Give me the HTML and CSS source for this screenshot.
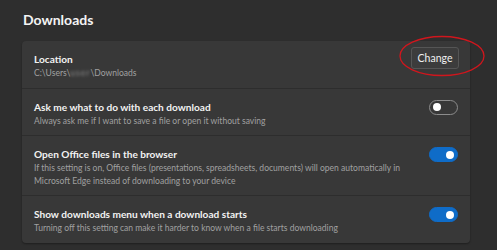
FILE: index.html
```html
<!DOCTYPE html>
<html>
<head>
<meta charset="utf-8">
<link rel="stylesheet" href="styles.css">
</head>
<body>
<main class="page">
  <h1 class="heading">Downloads</h1>
  <section class="card">
    <div class="row">
      <div class="text">
        <div class="title">Location</div>
        <div class="desc">C:\Users\<span class="blur">user</span>\Downloads</div>
      </div>
      <div class="action">
        <button class="btn">Change</button>
        <svg class="circle" width="90" height="44" viewBox="0 0 90 44"><ellipse cx="45" cy="22" rx="42" ry="19.5" fill="none" stroke="#d0161d" stroke-width="1.3"/></svg>
      </div>
    </div>
    <div class="row">
      <div class="text">
        <div class="title">Ask me what to do with each download</div>
        <div class="desc">Always ask me if I want to save a file or open it without saving</div>
      </div>
      <div class="action"><span class="toggle"></span></div>
    </div>
    <div class="row">
      <div class="text">
        <div class="title">Open Office files in the browser</div>
        <div class="desc">If this setting is on, Office files (presentations, spreadsheets, documents) will open automatically in Microsoft Edge instead of downloading to your device</div>
      </div>
      <div class="action"><span class="toggle on"></span></div>
    </div>
    <div class="row">
      <div class="text">
        <div class="title">Show downloads menu when a download starts</div>
        <div class="desc">Turning off this setting can make it harder to know when a file starts downloading</div>
      </div>
      <div class="action"><span class="toggle on"></span></div>
    </div>
  </section>
</main>
</body>
</html>
```

FILE: styles.css
```css
* { box-sizing: border-box; }
html, body { margin: 0; padding: 0; }
body {
  background: #2e2e2e;
  font-family: Lato, "Open Sans", sans-serif;
  color: #fff;
  width: 497px;
  height: 250px;
  overflow: hidden;
}
.page {
  padding: 9px 27px 0 22px;
}
.heading {
  margin: 0 0 10px 1px;
  font-size: 14px;
  font-weight: 700;
  line-height: 22px;
  color: #f4f4f4;
}
.card {
  background: #383838;
  border-radius: 4px;
  box-shadow: 0 1px 2px rgba(0,0,0,0.35);
}
.row {
  display: flex;
  align-items: flex-start;
  justify-content: space-between;
  padding: 11px 11px 8px 12px;
  border-top: 1px solid #2d2d2d;
}
.row:first-child { border-top: none; }
.text { flex: 1; min-width: 0; padding-right: 5px; }
.title {
  font-size: 10.1px;
  font-weight: 700;
  line-height: 14px;
  color: #f2f2f2;
  margin-bottom: 1px;
}
.desc {
  font-size: 8.55px;
  line-height: 12.5px;
  color: #a0a0a0;
}
.blur { filter: blur(1.4px); color: #8a8a8a; letter-spacing: 1px; }
.action {
  position: relative;
  flex: none;
  width: 48px;
  display: flex;
  justify-content: flex-end;
}
.btn {
  font-family: inherit;
  font-size: 10.5px;
  line-height: 14px;
  color: #f0f0f0;
  background: #3c3c3c;
  border: 1px solid #555;
  border-radius: 3px;
  width: 48px;
  height: 22px;
  padding: 0;
  margin-top: -5px;
}
.circle {
  position: absolute;
  left: -14px;
  top: -18px;
}
.toggle {
  position: relative;
  display: block;
  width: 29px;
  height: 15px;
  border: 1px solid #8c8c8c;
  border-radius: 8px;
  margin: 0 1px 0 0;
}
.toggle::after {
  content: "";
  position: absolute;
  left: 3px;
  top: 2.5px;
  width: 8px;
  height: 8px;
  border-radius: 50%;
  background: #fff;
}
.toggle.on {
  background: #0f6cc8;
  border-color: #0f6cc8;
}
.toggle.on::after { left: auto; right: 3px; }
```
